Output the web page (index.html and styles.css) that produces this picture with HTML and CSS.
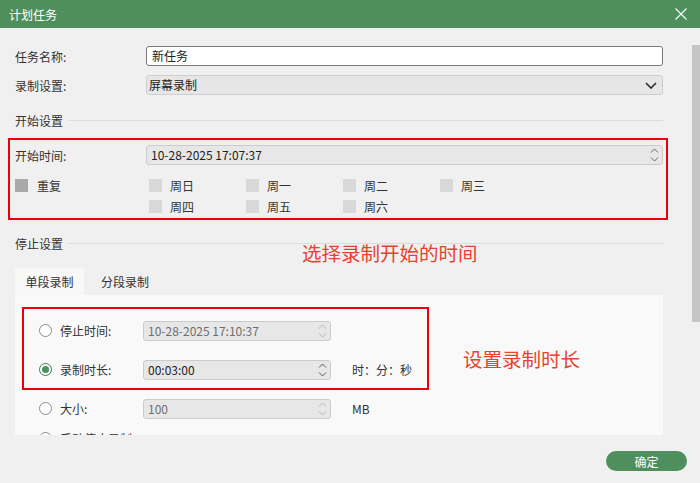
FILE: index.html
```html
<!DOCTYPE html>
<html lang="zh-CN">
<head>
<meta charset="utf-8">
<title>计划任务</title>
<link rel="stylesheet" href="styles.css">
</head>
<body>
<div class="dialog">
  <header class="titlebar">
    <span class="title">计划任务</span>
    <span class="close" aria-label="关闭">
      <svg width="12" height="12" viewBox="0 0 12 12"><path d="M0.5 0.5L11.5 11.5M11.5 0.5L0.5 11.5" stroke="#fff" stroke-width="1.1" fill="none"/></svg>
    </span>
  </header>

  <div class="body">
    <main class="content">
      <div class="field">
        <span class="label">任务名称:</span>
        <div class="input text">新任务</div>
      </div>
      <div class="field gap">
        <span class="label">录制设置:</span>
        <div class="input select">
          <span>屏幕录制</span>
          <svg class="chevron" width="12" height="7" viewBox="0 0 12 7"><path d="M1 1L6 6L11 1" stroke="#2b2b2b" stroke-width="1.6" fill="none"/></svg>
        </div>
      </div>

      <div class="section"><span>开始设置</span><i class="rule"></i></div>

      <div class="highlight start-group">
        <div class="field">
          <span class="label">开始时间:</span>
          <div class="input spin">
            <span>10-28-2025 17:07:37</span>
            <svg class="spinner" width="9" height="16" viewBox="0 0 9 16"><path d="M1 5.5L4.5 2L8 5.5M1 10.5L4.5 14L8 10.5" stroke="#666" stroke-width="1" fill="none"/></svg>
          </div>
        </div>
        <div class="repeat">
          <label class="check repeat-check"><span class="box dark"></span>重复</label>
          <div class="weekdays">
            <label class="check"><span class="box"></span>周日</label>
            <label class="check"><span class="box"></span>周一</label>
            <label class="check"><span class="box"></span>周二</label>
            <label class="check"><span class="box"></span>周三</label>
            <label class="check"><span class="box"></span>周四</label>
            <label class="check"><span class="box"></span>周五</label>
            <label class="check"><span class="box"></span>周六</label>
          </div>
        </div>
      </div>

      <div class="section stop"><span>停止设置</span><i class="rule"></i></div>
      <p class="note note-start">选择录制开始的时间</p>

      <div class="tabs">
        <span class="tab active">单段录制</span>
        <span class="tab">分段录制</span>
      </div>

      <div class="panel">
        <div class="highlight stop-group">
          <div class="row">
            <span class="radio"></span>
            <span class="row-label">停止时间:</span>
            <div class="input spin small disabled">
              <span>10-28-2025 17:10:37</span>
              <svg class="spinner" width="9" height="16" viewBox="0 0 9 16"><path d="M1 5.5L4.5 2L8 5.5M1 10.5L4.5 14L8 10.5" stroke="#b5b5b5" stroke-width="1" fill="none"/></svg>
            </div>
          </div>
          <div class="row">
            <span class="radio checked"></span>
            <span class="row-label">录制时长:</span>
            <div class="input spin small">
              <span>00:03:00</span>
              <svg class="spinner" width="9" height="16" viewBox="0 0 9 16"><path d="M1 5.5L4.5 2L8 5.5M1 10.5L4.5 14L8 10.5" stroke="#555" stroke-width="1" fill="none"/></svg>
            </div>
            <span class="unit">时：分：秒</span>
          </div>
        </div>
        <div class="row">
          <span class="radio"></span>
          <span class="row-label">大小:</span>
          <div class="input spin small disabled">
            <span>100</span>
            <svg class="spinner" width="9" height="16" viewBox="0 0 9 16"><path d="M1 5.5L4.5 2L8 5.5M1 10.5L4.5 14L8 10.5" stroke="#b5b5b5" stroke-width="1" fill="none"/></svg>
          </div>
          <span class="unit">MB</span>
        </div>
        <div class="row short">
          <span class="radio"></span>
          <span class="row-label">手动停止录制</span>
        </div>
        <p class="note note-duration">设置录制时长</p>
      </div>
    </main>
    <div class="scrollbar"><div class="thumb"></div></div>
  </div>

  <footer class="footer">
    <button class="ok">确定</button>
  </footer>
</div>
</body>
</html>
```

FILE: styles.css
```css
* { box-sizing: border-box; }

html, body {
  margin: 0;
  padding: 0;
  background: #f0f0f0;
}

body {
  font-family: "Noto Sans CJK SC", "Noto Sans", sans-serif;
  font-size: 12px;
  color: #333;
}

.dialog {
  width: 700px;
  height: 483px;
  display: flex;
  flex-direction: column;
  background: #f0f0f0;
}

/* title bar */
.titlebar {
  height: 28px;
  flex: none;
  background: #4e8f5d;
  color: #fff;
  display: flex;
  align-items: center;
  justify-content: space-between;
  padding: 0 13px 0 9px;
}
.title { font-size: 12px; }
.close { display: flex; }

/* scrolling body */
.body {
  flex: 1;
  display: flex;
  min-height: 0;
}
.content {
  flex: 1;
  position: relative;
  overflow: hidden;
  padding: 18px 29px 0 15px;
}
.scrollbar {
  width: 8px;
  flex: none;
  padding-top: 17px;
}
.thumb {
  height: 277px;
  background: #c5c5c5;
}

/* form fields */
.field {
  display: flex;
  align-items: center;
  height: 20px;
}
.field.gap { margin-top: 9px; }
.label {
  width: 131px;
  flex: none;
  color: #333;
}

.input {
  height: 20px;
  border-radius: 3px;
  display: flex;
  align-items: center;
  justify-content: space-between;
  line-height: 18px;
  color: #222;
}
.field .input { flex: 1; }
.input.text {
  background: #fff;
  border: 1px solid #7b7b7b;
  padding-left: 5px;
}
.input.select {
  background: #e6e6e6;
  border: 1px solid #cecece;
  padding: 0 5px 0 2px;
}
.input.spin {
  background: #e7e7e7;
  border: 1px solid #cbcbcb;
  padding: 0 3px 0 4px;
}
.input.small { width: 188px; flex: none; }
.input.disabled { color: #6e6e6e; }

/* section headers */
.section {
  display: flex;
  align-items: center;
  gap: 5px;
  height: 20px;
  margin-top: 15px;
  color: #333;
}
.section .rule {
  flex: 1;
  height: 1px;
  background: #dddddd;
}
.section.stop { margin-top: 16px; }

/* red highlight frames */
.highlight { position: relative; }
.highlight::after {
  content: "";
  position: absolute;
  border: 2px solid #e8000c;
  pointer-events: none;
}
.start-group { margin-top: 15px; }
.start-group::after {
  top: -7px;
  bottom: -3px;
  left: -7px;
  right: -5px;
}
.stop-group::after {
  top: -4px;
  bottom: -1px;
  left: -17px;
  width: 403px;
}

/* repeat + weekdays */
.repeat {
  display: flex;
  margin-top: 10px;
}
.repeat-check {
  width: 131px;
  flex: none;
  height: 21px;
}
.repeat-check .box { margin-right: 9px; }
.weekdays {
  display: grid;
  grid-template-columns: repeat(4, 97px);
  grid-auto-rows: 21px;
  padding-left: 3px;
}
.check {
  display: flex;
  align-items: center;
  color: #333;
}
.box {
  width: 13px;
  height: 13px;
  background: #d8d8d8;
  margin-right: 8px;
  flex: none;
}
.box.dark { background: #a9a9a9; }

/* annotations */
.note {
  position: absolute;
  margin: 0;
  font-size: 19.5px;
  line-height: 24px;
  color: #e4432f;
  white-space: nowrap;
}
.note-start { left: 302px; top: 213px; }
.note-duration { left: 448px; top: 52px; }

/* tabs */
.tabs {
  display: flex;
  gap: 5px;
  margin-top: 15px;
}
.tab {
  height: 27px;
  line-height: 27px;
  padding: 0 12px;
  color: #333;
}
.tab.active {
  width: 69px;
  padding: 0;
  text-align: center;
  background: #f8f8f8;
}

/* stop panel */
.panel {
  position: relative;
  background: #f9f9f9;
  padding: 16px 0 0 24px;
  height: 200px;
}
.row {
  display: flex;
  align-items: center;
  height: 39px;
}
.row.short { height: 20px; }
.radio {
  width: 13px;
  height: 13px;
  border-radius: 50%;
  border: 1px solid #8c8c8c;
  background: #fff;
  flex: none;
  margin-right: 8px;
  display: flex;
  align-items: center;
  justify-content: center;
}
.radio.checked { border-color: #3f7a4f; }
.radio.checked::before {
  content: "";
  width: 7px;
  height: 7px;
  border-radius: 50%;
  background: #4e8f5d;
}
.row-label {
  width: 83px;
  flex: none;
  color: #333;
}
.unit {
  margin-left: 21px;
  color: #333;
}

/* footer */
.footer {
  height: 48px;
  flex: none;
  display: flex;
  justify-content: flex-end;
  align-items: flex-start;
  padding: 16px 13px 0 0;
}
.ok {
  width: 81px;
  height: 20px;
  border: none;
  border-radius: 10px;
  background: #4e8f5d;
  color: #fff;
  font-family: inherit;
  font-size: 12px;
  padding: 0;
}
```
